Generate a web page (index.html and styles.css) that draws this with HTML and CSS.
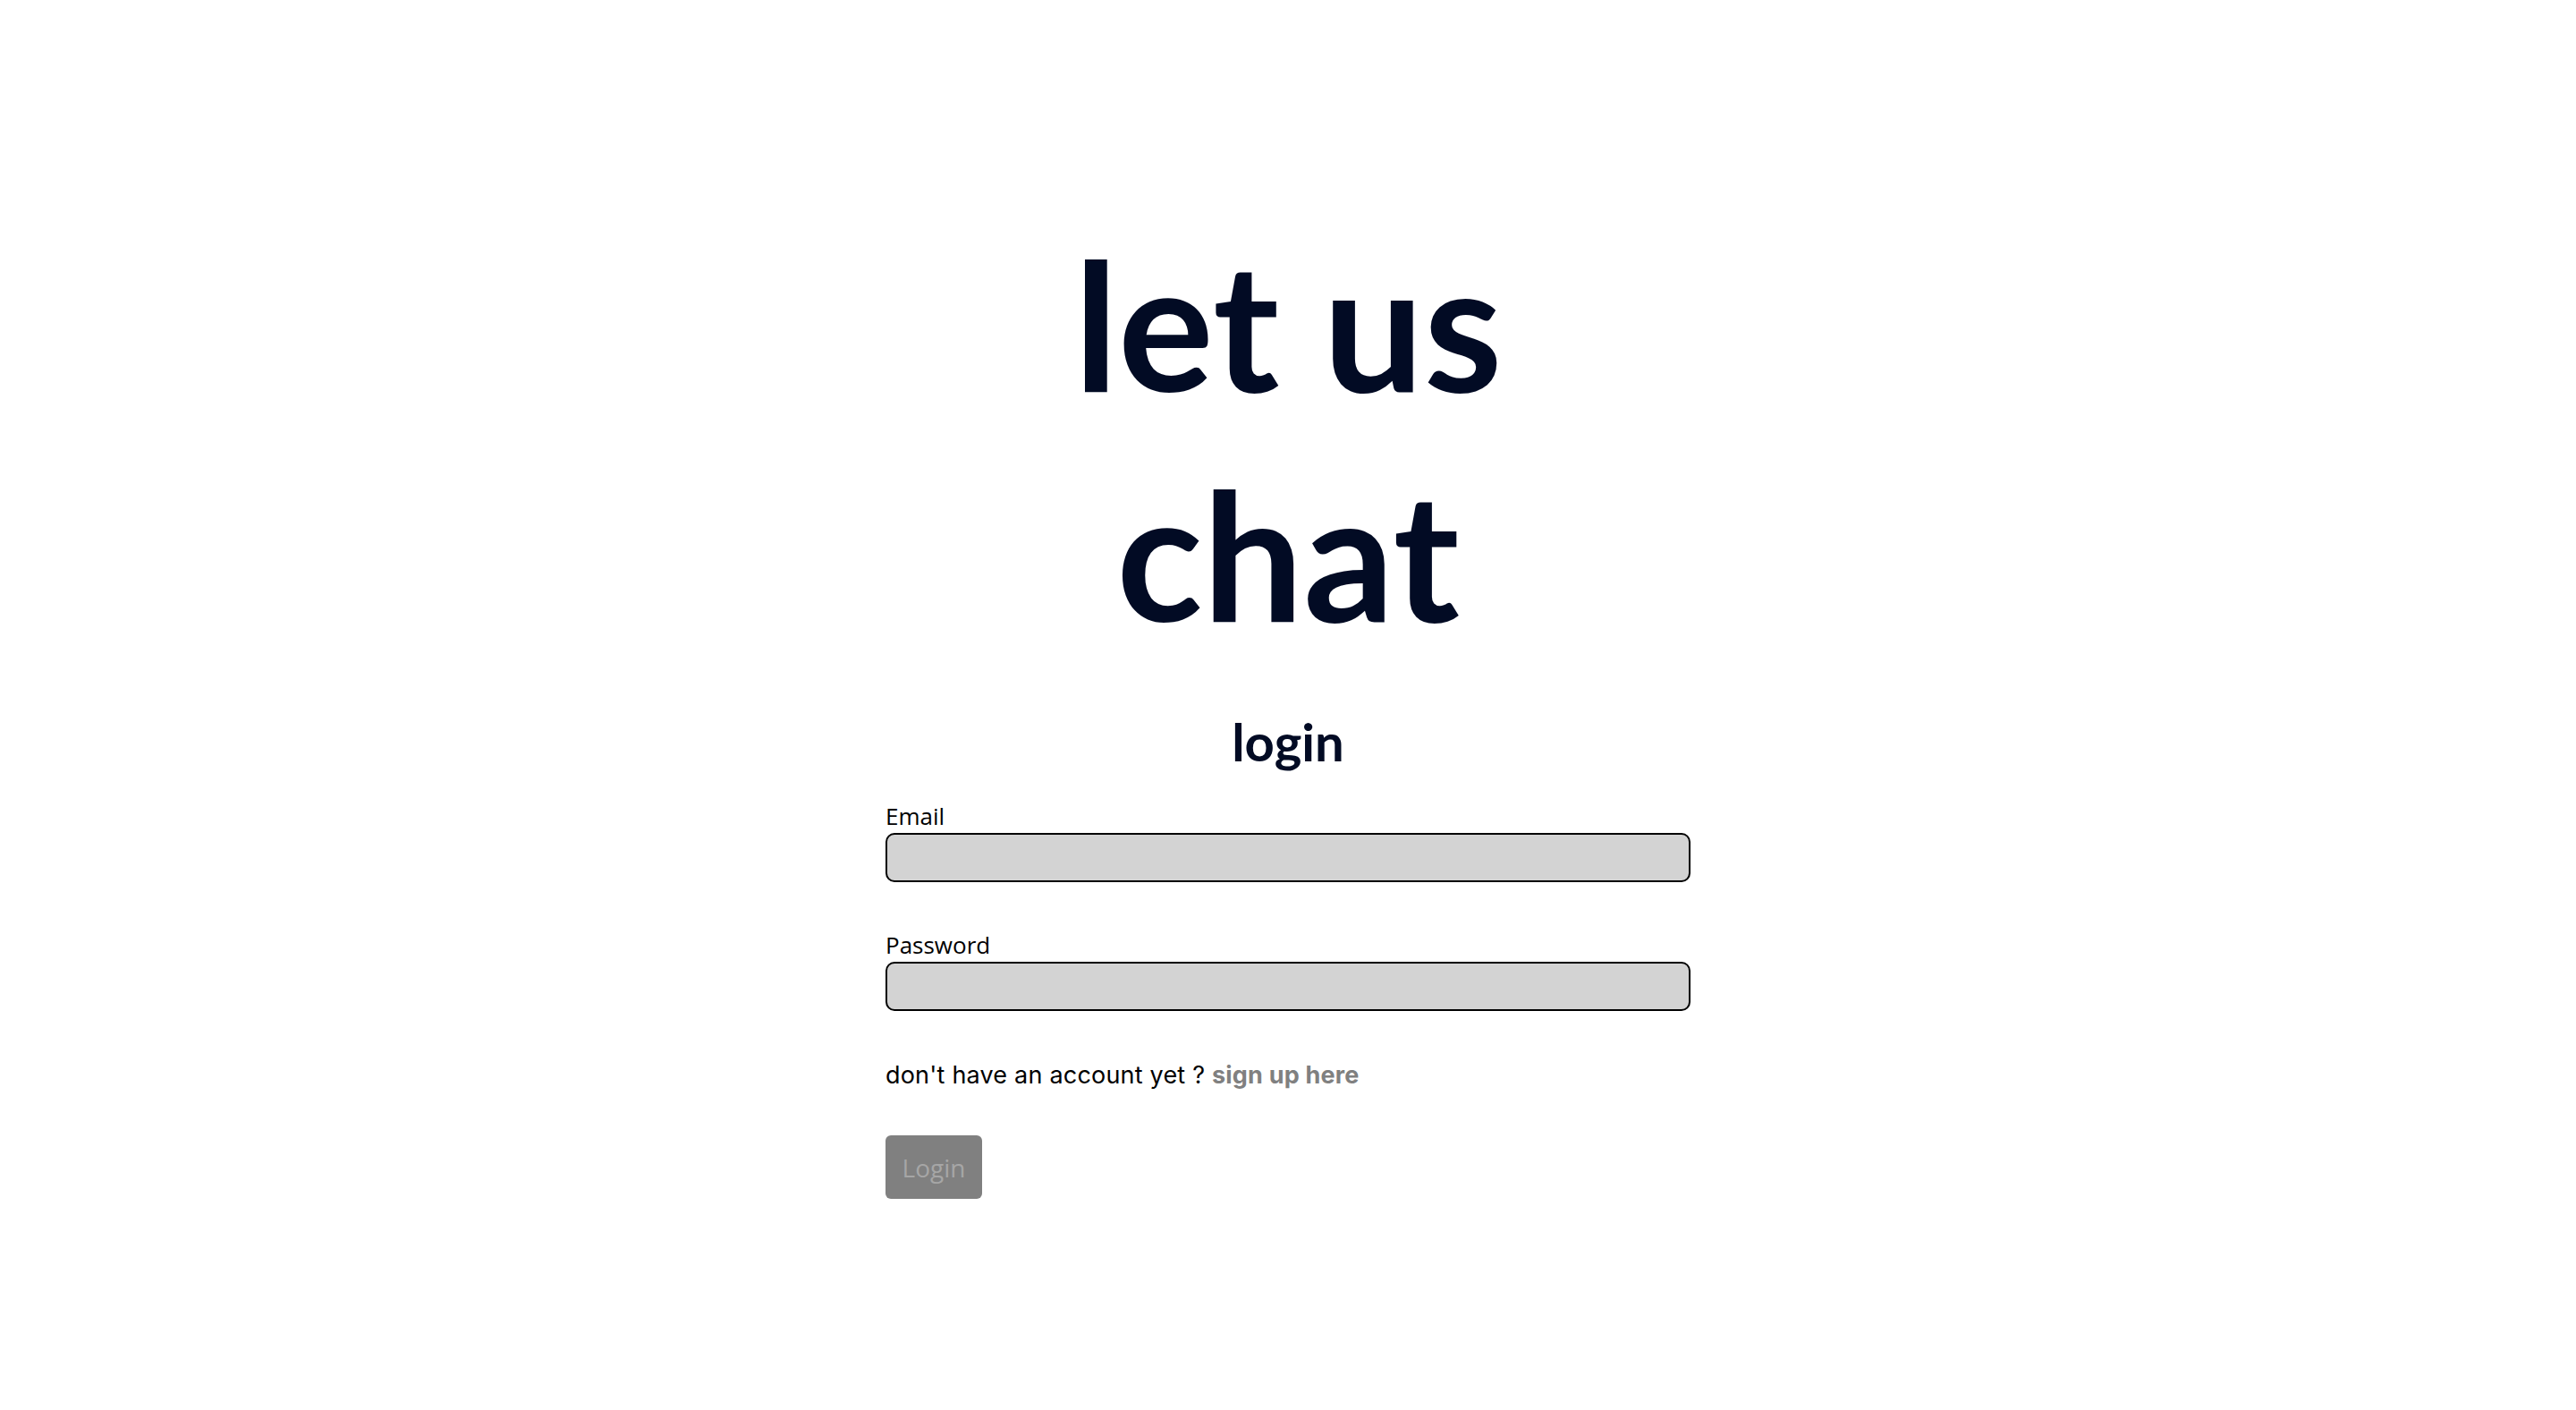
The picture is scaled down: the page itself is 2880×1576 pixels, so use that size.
FILE: index.html
```html
<!DOCTYPE html>
<html lang="en">
<head>
<meta charset="utf-8">
<title>let us chat - login</title>
<link rel="stylesheet" href="styles.css">
</head>
<body>
<main class="page">
  <h1 class="title">let us<br>chat</h1>
  <h2 class="subtitle">login</h2>
  <form class="form">
    <div class="field">
      <label class="label" for="email">Email</label>
      <input class="input" id="email" type="email">
    </div>
    <div class="field field-gap">
      <label class="label" for="password">Password</label>
      <input class="input" id="password" type="password">
    </div>
    <p class="switch">don't have an account yet ? <a class="switch-link" href="#">sign up here</a></p>
    <button class="btn" type="button" disabled>Login</button>
  </form>
</main>
</body>
</html>
```

FILE: styles.css
```css
html, body {
  margin: 0;
  padding: 0;
  background: #ffffff;
}

.page {
  display: flex;
  flex-direction: column;
  align-items: center;
}

.title {
  margin: 233px 0 0;
  font-family: Lato, "Noto Sans", sans-serif;
  font-weight: 700;
  font-size: 200px;
  line-height: 257px;
  color: #020b24;
  text-align: center;
}

.subtitle {
  margin: 47px 0 0;
  font-family: Lato, "Noto Sans", sans-serif;
  font-weight: 700;
  font-size: 58px;
  line-height: 70px;
  color: #020b24;
  text-align: center;
}

.form {
  width: 900px;
  margin-top: 31px;
  display: flex;
  flex-direction: column;
  align-items: flex-start;
}

.field {
  width: 100%;
  display: flex;
  flex-direction: column;
  gap: 1px;
}

.field-gap {
  margin-top: 53px;
}

.label {
  font-family: "Open Sans", "Noto Sans", sans-serif;
  font-size: 26px;
  line-height: 35px;
  color: #000;
}

.input {
  box-sizing: border-box;
  width: 100%;
  height: 55px;
  margin: 0;
  border: 2px solid #000;
  border-radius: 10px;
  background: #d3d3d3;
  outline: none;
}

.switch {
  margin: 56px 0 0;
  font-family: Inter, Roboto, sans-serif;
  font-size: 27px;
  letter-spacing: 0.2px;
  line-height: 31px;
  color: #000;
}

.switch-link {
  color: #808080;
  font-weight: 700;
  text-decoration: none;
}

.btn {
  margin-top: 52px;
  width: 108px;
  height: 71px;
  padding: 0;
  border: none;
  border-radius: 6px;
  background: #808080;
  color: #a6a6a6;
  font-family: "Open Sans", "Noto Sans", sans-serif;
  font-size: 28px;
}
```
